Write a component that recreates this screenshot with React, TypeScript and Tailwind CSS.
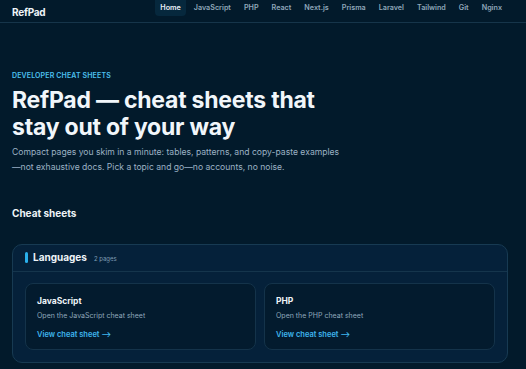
const nav = ["Home", "JavaScript", "PHP", "React", "Next.js", "Prisma", "Laravel", "Tailwind", "Git", "Nginx"];

const sheets = [
  { name: "JavaScript", desc: "Open the JavaScript cheat sheet" },
  { name: "PHP", desc: "Open the PHP cheat sheet" },
];

export default function App() {
  return (
    <div className="min-h-[369px] bg-[#021a2b] font-['Inter',sans-serif] text-[#e8f1f8]">
      <header className="flex h-[23px] items-start justify-between border-b border-[#16354a] pl-3 pr-[19px]">
        <span className="mt-[5px] text-[10px] font-bold tracking-tight text-[#eef4f8]">RefPad</span>
        <nav className="flex gap-[3px]">
          {nav.map((n) => (
            <a
              key={n}
              className={`flex h-[16px] items-center rounded-b-[4px] px-[5px] text-[7.2px] font-semibold ${
                n === "Home" ? "bg-[#06283d] text-[#e8f1f8]" : "text-[#8fa7ba]"
              }`}
            >
              {n}
            </a>
          ))}
        </nav>
      </header>

      <main className="px-3 pt-[48px]">
        <p className="text-[7px] font-semibold uppercase tracking-[0.02em] text-[#4cc0ef]">Developer cheat sheets</p>
        <h1 className="mt-[5px] text-[23px] font-bold leading-[27px] tracking-[-0.01em] text-[#f1f6fa]">
          RefPad — cheat sheets that
          <br />
          stay out of your way
        </h1>
        <p className="mt-[4px] text-[8.6px] leading-[15px] text-[#9cb2c4]">
          Compact pages you skim in a minute: tables, patterns, and copy-paste examples
          <br />
          —not exhaustive docs. Pick a topic and go—no accounts, no noise.
        </p>

        <h2 className="mt-[31px] text-[10px] font-bold text-[#eef4f8]">Cheat sheets</h2>

        <section className="mt-[23px] mr-[6px] rounded-[10px] border border-[#173a52] bg-[#05213a]">
          <div className="flex h-[27px] items-center gap-[5px] border-b border-[#15354c] pl-3">
            <span className="h-[11px] w-[3px] rounded-full bg-[#2ab0ec]" />
            <span className="text-[10px] font-bold text-[#eef4f8]">Languages</span>
            <span className="ml-[2px] mt-[1px] text-[6px] text-[#7f9db4]">2 pages</span>
          </div>
          <div className="grid grid-cols-2 gap-[8px] px-3 pb-3 pt-[11px]">
            {sheets.map((s) => (
              <div key={s.name} className="h-[67px] rounded-[8px] border border-[#14334a] bg-[#031b2e] px-[11px] pt-[11px]">
                <p className="text-[8.5px] font-bold text-[#eef4f8]">{s.name}</p>
                <p className="mt-[4px] text-[7px] text-[#8fa7ba]">{s.desc}</p>
                <p className="mt-[7px] text-[7.5px] font-semibold text-[#3fb6ee]">View cheat sheet ⟶</p>
              </div>
            ))}
          </div>
        </section>
      </main>
    </div>
  );
}
